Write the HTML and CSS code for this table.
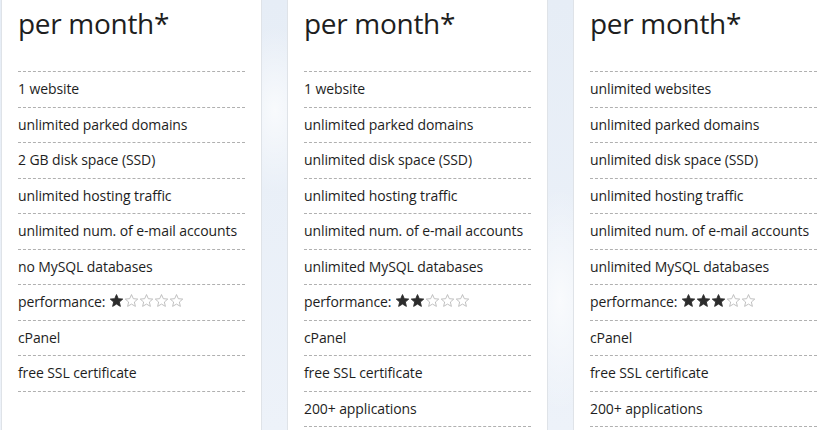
FILE: index.html
```html
<!DOCTYPE html>
<html lang="en">
<head>
<meta charset="utf-8">
<link rel="stylesheet" href="styles.css">
<title>Hosting plans</title>
</head>
<body>
<svg width="0" height="0" class="defs">
  <defs>
    <symbol id="star" viewBox="0 0 24 24">
      <path d="M12 2.5l2.9 6.6 7.1.6-5.4 4.7 1.6 7-6.2-3.7-6.2 3.7 1.6-7L2 9.7l7.1-.6z"/>
    </symbol>
  </defs>
</svg>
<div class="plans">
  <section class="plan">
    <h2 class="price">per month*</h2>
    <ul class="features">
      <li>1 website</li>
      <li>unlimited parked domains</li>
      <li>2 GB disk space (SSD)</li>
      <li>unlimited hosting traffic</li>
      <li>unlimited num. of e-mail accounts</li>
      <li>no MySQL databases</li>
      <li>performance: <span class="stars"><svg class="star on"><use href="#star"/></svg><svg class="star"><use href="#star"/></svg><svg class="star"><use href="#star"/></svg><svg class="star"><use href="#star"/></svg><svg class="star"><use href="#star"/></svg></span></li>
      <li>cPanel</li>
      <li>free SSL certificate</li>
    </ul>
  </section>
  <section class="plan">
    <h2 class="price">per month*</h2>
    <ul class="features">
      <li>1 website</li>
      <li>unlimited parked domains</li>
      <li>unlimited disk space (SSD)</li>
      <li>unlimited hosting traffic</li>
      <li>unlimited num. of e-mail accounts</li>
      <li>unlimited MySQL databases</li>
      <li>performance: <span class="stars"><svg class="star on"><use href="#star"/></svg><svg class="star on"><use href="#star"/></svg><svg class="star"><use href="#star"/></svg><svg class="star"><use href="#star"/></svg><svg class="star"><use href="#star"/></svg></span></li>
      <li>cPanel</li>
      <li>free SSL certificate</li>
      <li>200+ applications</li>
    </ul>
  </section>
  <section class="plan">
    <h2 class="price">per month*</h2>
    <ul class="features">
      <li>unlimited websites</li>
      <li>unlimited parked domains</li>
      <li>unlimited disk space (SSD)</li>
      <li>unlimited hosting traffic</li>
      <li>unlimited num. of e-mail accounts</li>
      <li>unlimited MySQL databases</li>
      <li>performance: <span class="stars"><svg class="star on"><use href="#star"/></svg><svg class="star on"><use href="#star"/></svg><svg class="star on"><use href="#star"/></svg><svg class="star"><use href="#star"/></svg><svg class="star"><use href="#star"/></svg></span></li>
      <li>cPanel</li>
      <li>free SSL certificate</li>
      <li>200+ applications</li>
    </ul>
  </section>
</div>
</body>
</html>
```
FILE: styles.css
```css
html, body {
  margin: 0;
  padding: 0;
  height: 100%;
  overflow: hidden;
}
body {
  background: #e8eff7;
  background-image:
    radial-gradient(ellipse 60px 120px at 275px 110px, rgba(255,255,255,0.7), rgba(255,255,255,0) 70%),
    radial-gradient(ellipse 60px 160px at 560px 300px, rgba(255,255,255,0.7), rgba(255,255,255,0) 70%),
    linear-gradient(180deg, #e6edf6, #edf2f9);
  font-family: "Open Sans", "Liberation Sans", sans-serif;
  color: #1e1e1e;
}
.defs { position: absolute; }
.plans {
  display: flex;
  gap: 25px;
  padding-left: 1px;
  width: 900px;
  height: 100%;
}
.plan {
  flex: 0 0 261px;
  box-sizing: border-box;
  background: #fff;
  border-left: 1px solid #dfe3e8;
  border-right: 1px solid #dfe3e8;
  padding: 0 16px 0 16px;
}
.price {
  margin: 8px 0 0 0;
  height: 63px;
  font-weight: 400;
  font-size: 28px;
  line-height: 30px;
  letter-spacing: -0.3px;
}
.features {
  list-style: none;
  margin: 0;
  padding: 0;
  border-top: 1px dashed #b0b0b0;
}
.features li {
  height: 34.5px;
  line-height: 34.5px;
  font-size: 14px;
  border-bottom: 1px dashed #b0b0b0;
  white-space: nowrap;
  letter-spacing: -0.1px;
}
.stars {
  display: inline-flex;
  vertical-align: -1px;
  gap: 0;
}
.star {
  width: 15px;
  height: 15px;
  fill: none;
  stroke: #b8b8b8;
  stroke-width: 1.4;
}
.star.on {
  fill: #2c2c2c;
  stroke: #2c2c2c;
}
```
